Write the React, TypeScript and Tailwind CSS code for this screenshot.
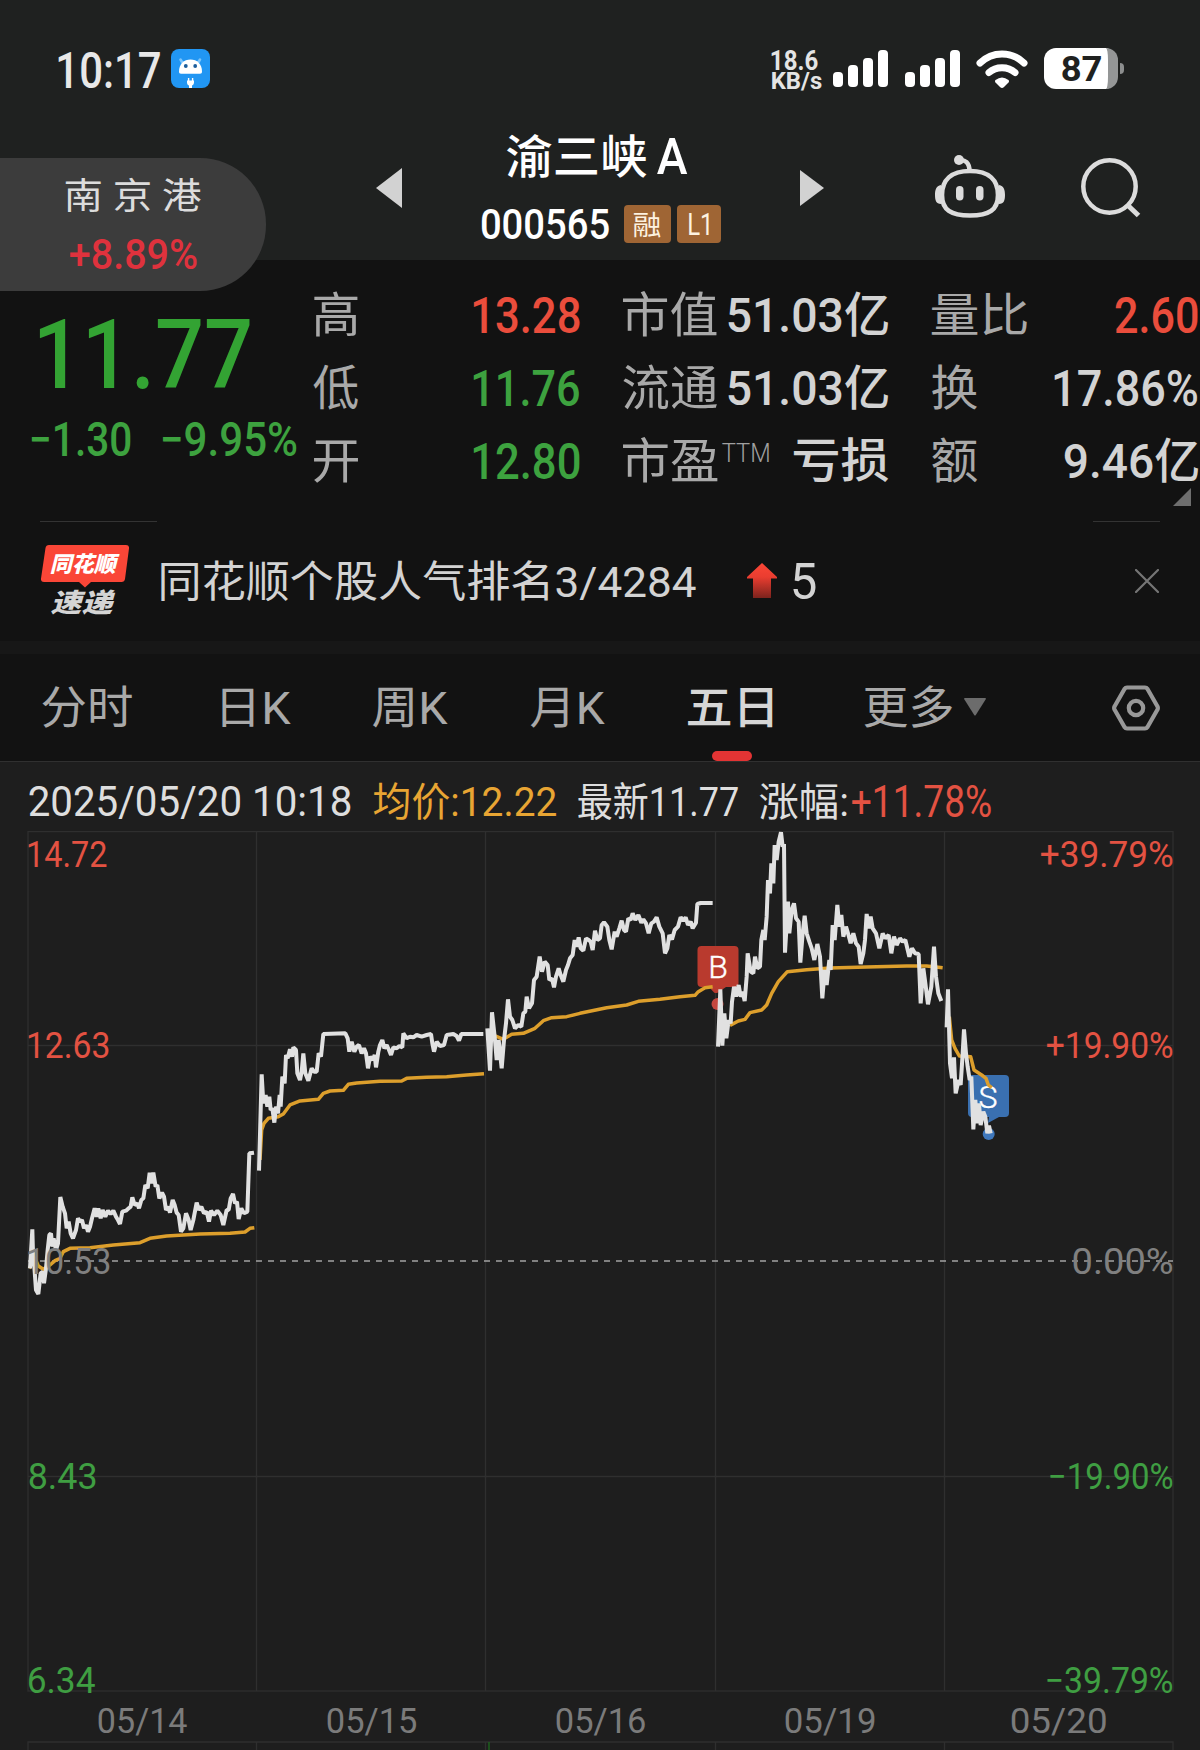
import { useLayoutEffect, useRef } from 'react';
import type { ReactNode } from 'react';

/** Text whose glyphs fill the box given by the width and height classes. */
function Fit({ className = '', children }: { className?: string; children: string }) {
  const box = useRef<HTMLSpanElement>(null);
  const inner = useRef<HTMLSpanElement>(null);
  const mark = useRef<HTMLElement>(null);
  useLayoutEffect(() => {
    const b = box.current!;
    const t = inner.current!;
    const cs = getComputedStyle(t);
    const ctx = document.createElement('canvas').getContext('2d')!;
    ctx.font = `${cs.fontStyle} ${cs.fontWeight} ${cs.fontSize} ${cs.fontFamily}`;
    const m = ctx.measureText(children);
    // Latin bounds are measured slightly narrow, ideographs slightly wide.
    const inset = /[\u4e00-\u9fff]/.test(children) ? -0.4 : 0.7;
    const sx = (b.clientWidth - 2 * inset) / (m.actualBoundingBoxLeft + m.actualBoundingBoxRight);
    const sy = b.clientHeight / (m.actualBoundingBoxAscent + m.actualBoundingBoxDescent);
    const base = mark.current!.offsetTop + mark.current!.offsetHeight;
    const tx = m.actualBoundingBoxLeft * sx + inset;
    const ty = -(base - m.actualBoundingBoxAscent) * sy;
    t.style.transform = `translate(${tx}px, ${ty}px) scale(${sx}, ${sy})`;
  }, [children]);
  return (
    <span ref={box} className={`relative block shrink-0 ${className}`}>
      <span ref={inner} className="absolute left-0 top-0 origin-top-left whitespace-pre leading-[0.75]">
        {children}
        <i ref={mark} className="inline-block h-0 w-0" />
      </span>
    </span>
  );
}

function Signal() {
  return (
    <div className="flex h-[37px] items-end gap-[5px]">
      <i className="h-[15px] w-[10px] rounded-[4px] bg-white" />
      <i className="h-[22px] w-[10px] rounded-[4px] bg-white" />
      <i className="h-[29px] w-[10px] rounded-[4px] bg-white" />
      <i className="h-[37px] w-[10px] rounded-[4px] bg-white" />
    </div>
  );
}

function StatusBar() {
  return (
    <div className="flex h-[137px] items-center pl-[58px]">
      <Fit className="mt-[2px] h-[36px] w-[103px] text-[50px] font-medium text-[#e8e8e8]">10:17</Fit>
      <svg className="ml-[10px] h-[39px] w-[39px] shrink-0" viewBox="0 0 39 39">
        <rect width="39" height="39" rx="8" fill="#2196f3" />
        <path d="M9.5 10.500l3 5M29 10.500l-3 5" stroke="#7cc4fa" strokeWidth="2.600" strokeLinecap="round" />
        <path d="M8 22.500c0-7.500 5-12 11.500-12s11.500 4.500 11.500 12c0 1.700-.6 2.200-2 2.200H10c-1.400 0-2-.5-2-2.200z" fill="#fff" />
        <circle cx="14.800" cy="17" r="1.900" fill="#1c5e9c" />
        <circle cx="24.200" cy="17" r="1.900" fill="#1c5e9c" />
        <path d="M17.600 29v4M21.600 29v4" stroke="#fff" strokeWidth="1.400" />
        <path d="M16 31.500h7v2c0 2-1.500 2.700-2 3V39h-3v-2.500c-.7-.3-2-1-2-3z" fill="#fff" />
      </svg>
      <div className="ml-[561px] mt-[4px] flex flex-col gap-[2px]">
        <Fit className="h-[20px] w-[48px] text-[26px] font-bold text-[#e4e4e4]">18.6</Fit>
        <Fit className="h-[19px] w-[51px] text-[23px] font-bold text-[#e4e4e4]">KB/s</Fit>
      </div>
      <div className="ml-[11px]"><Signal /></div>
      <div className="ml-[17px]"><Signal /></div>
      <svg className="ml-[16px] h-[38px] w-[52px] shrink-0" viewBox="0 0 52 38">
        <g fill="none" stroke="#fff" strokeWidth="7" strokeLinecap="round">
          <path d="M4 13C16.500 1 35.500 1 48 13" />
          <path d="M13 22.500C20 16 32 16 39 22.500" />
        </g>
        <path d="M19.500 30q6.500-5 13 0q1 1 0 2.500l-4.500 4.500q-2 2-4 0l-4.500-4.500q-1-1.500 0-2.500z" fill="#fff" />
      </svg>
      <div className="ml-[16px] flex h-[41px] w-[74px] shrink-0 items-center overflow-hidden rounded-[12px] border-r-[10px] border-[#949696] bg-white pl-[17px]">
        <Fit className="h-[25px] w-[41px] text-[35px] font-bold text-[#1f2120]">87</Fit>
      </div>
      <i className="ml-[2px] h-[11px] w-[4px] rounded-r-[4px] bg-[#8c8e8e]" />
    </div>
  );
}

function TitleBar() {
  return (
    <div className="-mt-[4px] flex items-start pl-[376px]">
      <svg className="mt-[35px] h-[40px] w-[26px] shrink-0" viewBox="0 0 26 40"><path d="M26 0v40L0 20z" fill="#d2d2d2" /></svg>
      <div className="ml-[79px] w-[240px] shrink-0">
        <div className="flex h-[44px] items-start pl-[26px]">
          <Fit className="h-[45px] w-[139px] text-[47px] font-medium text-white">渝三峡</Fit>
          <Fit className="ml-[10px] mt-[5px] h-[36px] w-[32px] text-[50px] font-medium text-white">A</Fit>
        </div>
        <div className="mt-[28px] flex h-[38px] items-center">
          <Fit className="h-[30px] w-[129px] text-[42px] font-medium text-white">000565</Fit>
          <div className="ml-[14px] flex h-[38px] w-[47px] items-center justify-center rounded-[4px] bg-[#9f6534]">
            <Fit className="h-[27px] w-[27px] text-[28px] text-[#fdf2e0]">融</Fit>
          </div>
          <div className="ml-[6px] flex h-[38px] w-[44px] items-center justify-center rounded-[4px] bg-[#9f6534]">
            <Fit className="h-[22px] w-[22px] text-[31px] text-[#fdf2e0]">L1</Fit>
          </div>
        </div>
      </div>
      <svg className="ml-[79px] mt-[37px] h-[36px] w-[24px] shrink-0" viewBox="0 0 24 36"><path d="M0 0v36L24 18z" fill="#d2d2d2" /></svg>
      <svg className="ml-[111px] mt-[22px] h-[64px] w-[70px] shrink-0" viewBox="0 0 70 64">
        <circle cx="24" cy="5" r="5" fill="#dcdcdc" />
        <path d="M24 5.500C30 4 34.500 8 34.500 16" fill="none" stroke="#dcdcdc" strokeWidth="4.500" />
        <path d="M35 16C54 16 63 25 63 40C63 55 54 60.500 35 60.500S7 55 7 40C7 25 16 16 35 16z" fill="none" stroke="#dcdcdc" strokeWidth="4.600" />
        <path d="M6 30C1 31 0 35 0 40s1 9 6 9zM64 30c5 1 6 5 6 10s-1 9-6 9z" fill="#dcdcdc" />
        <rect x="21" y="31" width="7.500" height="14.500" rx="3.700" fill="#dcdcdc" />
        <rect x="41" y="31" width="7.500" height="14.500" rx="3.700" fill="#dcdcdc" />
      </svg>
      <svg className="ml-[76px] mt-[25px] h-[60px] w-[60px] shrink-0" viewBox="0 0 60 60" fill="none" stroke="#dcdcdc" strokeWidth="4.500">
        <ellipse cx="28.500" cy="28.500" rx="26.200" ry="26.200" />
        <path d="M47 47.500L57.500 57.500" strokeWidth="5" />
      </svg>
    </div>
  );
}

function Stat({ label, children }: { label: ReactNode; children: ReactNode }) {
  return (
    <div className="flex h-[73px] items-center justify-between">
      <div className="flex items-center">{label}</div>
      {children}
    </div>
  );
}

function Quote() {
  return (
    <div className="relative flex h-[261px] items-start">
      <div className="w-[314px] shrink-0 pl-[31px] pt-[59px]">
        <Fit className="ml-[8px] h-[70px] w-[212px] text-[99px] font-medium text-[#33a333]">11.77</Fit>
        <div className="mt-[33px] flex">
          <Fit className="h-[34px] w-[100px] text-[46px] font-medium text-[#3da23f]">−1.30</Fit>
          <Fit className="ml-[31px] h-[34px] w-[135px] text-[46px] font-medium text-[#3da23f]">−9.95%</Fit>
        </div>
      </div>
      <div className="w-[266px] shrink-0 pt-[17px]">
        <Stat label={<Fit className="h-[46px] w-[44px] text-[47px] text-[#a9a9a9]">高</Fit>}>
          <Fit className="mt-[3px] h-[36px] w-[107px] text-[50px] font-medium text-[#ea4d3c]">13.28</Fit>
        </Stat>
        <Stat label={<Fit className="h-[46px] w-[44px] text-[47px] text-[#a9a9a9]">低</Fit>}>
          <Fit className="mt-[3px] h-[36px] w-[107px] text-[50px] font-medium text-[#3da23f]">11.76</Fit>
        </Stat>
        <Stat label={<Fit className="mt-[3px] h-[43px] w-[44px] text-[47px] text-[#a9a9a9]">开</Fit>}>
          <Fit className="mt-[3px] h-[36px] w-[107px] text-[50px] font-medium text-[#3da23f]">12.80</Fit>
        </Stat>
      </div>
      <div className="ml-[43px] w-[265px] shrink-0 pt-[17px]">
        <Stat label={<Fit className="h-[46px] w-[94px] text-[47px] text-[#a9a9a9]">市值</Fit>}>
          <Fit className="h-[46px] w-[160px] text-[48px] font-medium text-[#d3d3d3]">51.03亿</Fit>
        </Stat>
        <Stat label={<Fit className="h-[46px] w-[94px] text-[47px] text-[#a9a9a9]">流通</Fit>}>
          <Fit className="h-[46px] w-[160px] text-[48px] font-medium text-[#d3d3d3]">51.03亿</Fit>
        </Stat>
        <Stat
          label={
            <>
              <Fit className="h-[46px] w-[94px] text-[47px] text-[#a9a9a9]">市盈</Fit>
              <Fit className="-mt-[15px] ml-[4px] h-[19px] w-[49px] text-[26px] font-light text-[#a0a0a0]">TTM</Fit>
            </>
          }
        >
          <Fit className="h-[46px] w-[94px] text-[47px] font-medium text-[#d3d3d3]">亏损</Fit>
        </Stat>
      </div>
      <div className="ml-[44px] w-[266px] shrink-0 pt-[17px]">
        <Stat label={<Fit className="h-[44px] w-[95px] text-[47px] text-[#a9a9a9]">量比</Fit>}>
          <Fit className="mt-[3px] h-[36px] w-[83px] text-[50px] font-medium text-[#ea4d3c]">2.60</Fit>
        </Stat>
        <Stat label={<Fit className="h-[46px] w-[45px] text-[47px] text-[#a9a9a9]">换</Fit>}>
          <Fit className="mt-[3px] h-[36px] w-[144px] text-[50px] font-medium text-[#d3d3d3]">17.86%</Fit>
        </Stat>
        <Stat label={<Fit className="h-[46px] w-[45px] text-[47px] text-[#a9a9a9]">额</Fit>}>
          <Fit className="h-[46px] w-[133px] text-[48px] font-medium text-[#d3d3d3]">9.46亿</Fit>
        </Stat>
      </div>
      <svg className="absolute right-[9px] top-[228px] h-[18px] w-[18px]" viewBox="0 0 18 18"><path d="M18 0v18H0z" fill="#6e6e6e" /></svg>
    </div>
  );
}

function Ranking() {
  return (
    <div className="h-[120px]">
      <div className="flex justify-between pl-[40px] pr-[40px]">
        <i className="h-px w-[117px] bg-[#333]" />
        <i className="h-px w-[67px] bg-[#333]" />
      </div>
      <div className="flex items-start pl-[41px] pt-[23px]">
        <div className="relative h-[72px] w-[88px] shrink-0">
          <svg className="absolute inset-0" width="88" height="72" viewBox="0 0 88 72">
            <path d="M8 0H85q3.500 0 3 3.500L84 34q-.5 3-3.500 3H50l-6 5.500L38 37H3q-3.500 0-3-3.500L4.500 3Q5 0 8 0z" fill="#fa4637" />
          </svg>
          <div className="relative pl-[10px] pt-[8px]">
            <Fit className="h-[22px] w-[69px] text-[24px] font-black italic text-white">同花顺</Fit>
            <Fit className="mt-[14px] h-[27px] w-[64px] text-[29px] font-black italic text-[#d4d4d4]">速递</Fit>
          </div>
        </div>
        <Fit className="ml-[32px] mt-[15px] h-[42px] w-[535px] text-[43px] text-[#d3d3d3]">同花顺个股人气排名3/4284</Fit>
        <svg className="ml-[51px] mt-[18px] h-[35px] w-[30px] shrink-0" viewBox="0 0 30 35">
          <defs>
            <linearGradient id="rise" x1="0" y1="0" x2="0" y2="1">
              <stop offset="0" stopColor="#fb4636" />
              <stop offset="0.400" stopColor="#ea3d30" />
              <stop offset="1" stopColor="#7c231d" />
            </linearGradient>
          </defs>
          <path d="M15 0L30 14v1.500h-6V35H6V15.500H0V14z" fill="url(#rise)" />
        </svg>
        <Fit className="ml-[15px] mt-[18px] h-[36px] w-[25px] text-[50px] text-[#d3d3d3]">5</Fit>
        <svg className="ml-[318px] mt-[24px] h-[24px] w-[24px] shrink-0" viewBox="0 0 24 24">
          <path d="M1 1l22 22M23 1L1 23" stroke="#757575" strokeWidth="2.200" strokeLinecap="round" />
        </svg>
      </div>
    </div>
  );
}

function Tabs() {
  return (
    <div className="flex h-[108px] items-start border-b border-[#303030] pl-[42px] pt-[31px]">
      <Fit className="h-[43px] w-[90px] text-[45px] text-[#a9a9a9]">分时</Fit>
      <Fit className="ml-[90px] mt-[3px] h-[40px] w-[69px] text-[45px] text-[#a9a9a9]">日K</Fit>
      <Fit className="ml-[82px] mt-[2px] h-[41px] w-[75px] text-[45px] text-[#a9a9a9]">周K</Fit>
      <Fit className="ml-[83px] mt-[2px] h-[41px] w-[74px] text-[45px] text-[#a9a9a9]">月K</Fit>
      <div className="ml-[83px] mt-[3px] flex w-[84px] shrink-0 flex-col">
        <Fit className="h-[40px] w-[84px] text-[45px] font-medium text-[#d6d6d6]">五日</Fit>
        <i className="ml-[24px] mt-[23px] h-[10px] w-[40px] rounded-[5px] bg-[#e33434]" />
      </div>
      <Fit className="ml-[93px] h-[43px] w-[87px] text-[45px] text-[#a9a9a9]">更多</Fit>
      <svg className="ml-[12px] mt-[13px] h-[18px] w-[22px] shrink-0" viewBox="0 0 22 18"><path d="M1 0h20q1.500 0 .6 1.500L11.800 17q-.8 1-1.600 0L.4 1.500Q-.5 0 1 0z" fill="#6c6c6c" /></svg>
      <svg className="ml-[126px] h-[46px] w-[48px] shrink-0" viewBox="0 0 48 46" fill="none" stroke="#989898" strokeWidth="4.200" strokeLinejoin="round">
        <path d="M15 2.500H33q1.500 0 2.500 1.500L45.500 21.500q.7 1.500 0 3L35.500 42q-1 1.500-2.500 1.500H15q-1.500 0-2.500-1.500L2.500 24.500q-.7-1.500 0-3L12.500 4q1-1.500 2.500-1.500z" />
        <circle cx="24" cy="23" r="7.200" />
      </svg>
    </div>
  );
}

function Info() {
  return (
    <div className="flex h-[69px] items-start pl-[28px] pt-[19px]">
      <Fit className="mt-[5px] h-[33px] w-[323px] text-[41px] text-[#dedede]">2025/05/20 10:18</Fit>
      <Fit className="ml-[23px] mt-[1px] h-[38px] w-[182px] text-[39px] text-[#e8a533]">均价:12.22</Fit>
      <Fit className="ml-[22px] mt-[1px] h-[38px] w-[160px] text-[39px] text-[#dedede]">最新11.77</Fit>
      <Fit className="ml-[22px] mt-[1px] h-[38px] w-[86px] text-[39px] text-[#dedede]">涨幅:</Fit>
      <Fit className="ml-[5px] mt-[5px] h-[31px] w-[141px] text-[41px] text-[#e35242]">+11.78%</Fit>
    </div>
  );
}

/* Intraday series, in thirds of a pixel, each relative to its own origin. */
const days = [
  {
    x: 0, y: 1020,
    price: '90,745 97,628 99,700 103,740 108,810 115,822 122,760 128,755 132,790 138,745 143,690 148,645 153,640 157,680 161,655 168,690 174,670 181,531 188,560 195,580 200,625 206,605 212,640 219,655 228,630 234,595 240,605 246,600 252,625 258,615 264,635 270,620 276,595 284,565 290,590 295,565 302,595 308,570 316,590 324,572 332,582 340,572 348,590 354,600 360,612 367,575 378,572 386,565 392,560 397,532 404,555 412,550 417,565 424,540 430,535 436,495 443,505 449,458 455,490 460,458 467,500 472,495 478,535 486,518 492,530 498,570 505,560 510,578 518,540 524,555 530,578 536,585 543,635 550,625 558,580 566,600 572,630 580,600 590,548 597,570 604,560 612,580 620,575 627,605 633,572 642,585 652,572 662,585 670,615 680,570 686,570 692,535 699,522 705,550 711,545 716,597 724,565 732,580 742,575 748,400 762,398',
    avg: '88,745 105,715 115,738 130,748 150,735 165,722 180,715 190,695 210,685 270,683 340,675 420,668 450,655 500,648 600,642 690,640 735,636 750,625 763,623',
  },
  {
    x: 240, y: 960,
    price: '57,632 65,343 70,430 77,405 82,440 88,410 92,450 97,445 103,488 108,440 114,460 119,405 122,440 127,350 134,370 138,285 143,295 150,268 156,290 160,262 168,270 172,340 180,360 185,335 190,280 196,340 205,362 215,325 222,335 230,335 236,280 243,290 250,222 316,220 323,235 328,275 335,245 343,275 350,260 357,255 365,280 372,265 378,280 384,325 390,290 398,300 404,285 408,322 415,275 420,255 427,240 433,265 440,255 447,270 453,285 460,262 470,265 478,258 487,262 490,220 500,235 510,230 520,232 530,225 545,230 560,225 573,222 577,250 582,275 590,245 600,258 612,255 620,225 640,222 650,228 657,242 664,222 730,222',
    avg: '60,600 65,510 72,490 85,475 115,470 130,462 150,435 180,423 235,418 250,400 270,393 310,391 325,373 350,369 420,364 485,363 500,355 560,352 620,350 680,345 732,341',
  },
  {
    x: 480, y: 880,
    price: '22,445 30,572 36,397 44,470 50,540 56,480 65,565 72,480 78,430 84,358 90,410 97,420 105,445 115,435 124,440 130,400 136,395 140,350 147,385 156,370 162,300 170,290 179,230 186,275 194,245 203,255 208,300 216,295 222,322 228,290 236,265 242,285 250,305 258,270 264,255 270,235 278,225 284,180 290,200 296,172 302,205 310,212 318,175 326,180 332,185 338,210 345,152 352,180 360,175 365,135 372,127 382,140 388,180 395,208 404,155 410,170 418,145 425,122 432,150 438,155 445,115 452,120 458,100 466,120 475,105 484,128 490,118 498,130 506,160 514,130 522,125 530,112 538,140 548,160 555,220 562,205 568,165 576,178 584,150 594,140 602,112 610,122 617,112 624,135 632,125 638,145 648,128 652,72 662,69 698,69',
    avg: '40,465 70,478 95,463 130,460 165,445 190,422 215,413 260,410 300,400 380,383 440,375 475,364 540,358 600,350 645,346 655,335 675,323 698,320',
  },
  {
    x: 700, y: 820,
    price: '54,680 61,508 67,677 73,580 79,655 86,600 92,610 96,545 102,500 108,530 116,495 122,530 128,515 134,543 140,470 143,400 152,455 160,460 165,410 172,445 180,440 184,360 190,330 194,360 200,290 204,180 210,220 214,130 220,190 224,75 230,120 236,65 243,37 248,80 252,72 255,398 264,245 268,340 275,270 282,250 288,295 296,305 301,428 308,340 314,287 320,340 328,365 335,385 343,420 352,372 360,410 367,535 374,450 380,495 388,420 392,450 398,315 404,360 412,255 418,320 424,285 430,350 438,320 444,340 452,370 460,340 468,370 476,380 482,432 490,400 495,360 500,282 506,325 512,290 518,325 528,340 538,385 548,340 556,355 566,345 574,400 582,350 590,375 600,355 608,365 616,360 628,410 636,385 645,400 656,402 662,550 670,445 676,490 684,553 694,500 702,380 708,470 715,520 724,543',
    avg: '90,616 115,603 135,598 150,578 185,570 200,555 215,520 235,485 262,455 320,449 390,444 500,441 620,438 680,438 728,443',
  },
  {
    x: 900, y: 920,
    price: '140,322 144,208 150,430 156,475 162,412 167,520 176,480 182,495 188,400 192,328 198,400 203,440 209,480 214,470 220,628 226,540 231,610 237,550 242,615 250,575 256,590 262,640 267,617 272,640',
    avg: '148,290 155,360 165,385 178,408 212,410 222,450 245,465 258,475 265,495 275,503',
  },
];

function Chart() {
  return (
    <div className="relative h-[919px]">
      <svg className="absolute inset-0" width="1200" height="919" viewBox="0 831 1200 919" fontFamily='Roboto, "Noto Sans", sans-serif'>
        <g stroke="#2f2f2f" strokeWidth="1.300" fill="none">
          <rect x="28" y="831.600" width="1145" height="859.400" />
          <path d="M256.500 831V1691M485.500 831V1691M715.500 831V1691M944.500 831V1691M28 1045.500H1173M28 1476.500H1173" />
          <path d="M28 1750V1742H1173V1750M256.500 1742v8M485.500 1742v8M715.500 1742v8M944.500 1742v8" />
        </g>
        <path d="M489 1742v8" stroke="#1d6b1d" strokeWidth="1.300" />
        <path d="M28 1261H1173" stroke="#a3a3a3" strokeWidth="1.700" strokeDasharray="6 6" />
        <rect x="697.500" y="946" width="41" height="41" rx="4" fill="#b93a2e" />
        <path d="M709 987h17l-8 5.500q-2 1-4 0z" fill="#b93a2e" />
        <circle cx="717.500" cy="1004" r="6" fill="#c4473e" />
        <rect x="968" y="1075" width="41" height="42" rx="4" fill="#3a70b0" />
        <path d="M989 1117h10l-11 6z" fill="#3a70b0" />
        <circle cx="988.700" cy="1134" r="6" fill="#3f78bd" />
        <text x="718" y="977.500" textAnchor="middle" fontSize="32" fontWeight="300" fill="#fff" stroke="#fff" strokeWidth="0.400">B</text>
        <text x="988" y="1108" textAnchor="middle" fontSize="32" fontWeight="300" fill="#fff" stroke="#fff" strokeWidth="0.400">S</text>
        {days.map((d) => (
          <g key={d.x} transform={`translate(${d.x} ${d.y}) scale(0.33333)`} fill="none">
            <polyline points={d.avg} stroke="#dd9f2c" strokeWidth="10.500" strokeLinejoin="round" />
            <polyline points={d.price} stroke="#e1e1e1" strokeWidth="12" strokeLinejoin="bevel" />
          </g>
        ))}
      </svg>
      <div className="absolute left-[28px] top-[10px] flex w-[1145px] flex-col">
        <div className="flex justify-between">
          <Fit className="h-[26px] w-[79px] text-[36px] text-[#e35242]">14.72</Fit>
          <Fit className="h-[26px] w-[133px] text-[36px] text-[#e35242]">+39.79%</Fit>
        </div>
        <div className="mt-[165px] flex justify-between">
          <Fit className="h-[26px] w-[81px] text-[36px] text-[#e35242]">12.63</Fit>
          <Fit className="h-[26px] w-[127px] text-[36px] text-[#e35242]">+19.90%</Fit>
        </div>
        <div className="mt-[190px] flex justify-between">
          <Fit className="h-[26px] w-[82px] text-[36px] text-[#808080]">10.53</Fit>
          <Fit className="h-[26px] w-[100px] text-[36px] text-[#808080]">0.00%</Fit>
        </div>
        <div className="mt-[189px] flex justify-between">
          <Fit className="h-[26px] w-[68px] text-[36px] text-[#3f9e42]">8.43</Fit>
          <Fit className="h-[26px] w-[124px] text-[36px] text-[#3f9e42]">−19.90%</Fit>
        </div>
        <div className="mt-[178px] flex justify-between">
          <Fit className="h-[26px] w-[68px] text-[36px] text-[#3f9e42]">6.34</Fit>
          <Fit className="h-[26px] w-[127px] text-[36px] text-[#3f9e42]">−39.79%</Fit>
        </div>
        <div className="mt-[15px] grid grid-cols-5 justify-items-center">
          <Fit className="h-[28px] w-[90px] text-[36px] text-[#7b7b7b]">05/14</Fit>
          <Fit className="h-[28px] w-[90px] text-[36px] text-[#7b7b7b]">05/15</Fit>
          <Fit className="h-[28px] w-[90px] text-[36px] text-[#7b7b7b]">05/16</Fit>
          <Fit className="h-[28px] w-[90px] text-[36px] text-[#7b7b7b]">05/19</Fit>
          <Fit className="h-[28px] w-[96px] text-[36px] text-[#7b7b7b]">05/20</Fit>
        </div>
      </div>
    </div>
  );
}

export default function App() {
  return (
    <div className="relative h-[1750px] w-[1200px] overflow-hidden bg-[#121212] font-[Roboto,'Noto_Sans_CJK_SC',sans-serif]">
      <header className="h-[260px] bg-[#1f2120]">
        <StatusBar />
        <TitleBar />
      </header>
      <div className="absolute left-0 top-[158px] h-[133px] w-[266px] rounded-r-[66px] bg-[#3c3c3c] pl-[66px] pt-[19px]">
        <Fit className="h-[36px] w-[135px] text-[36px] text-[#dcdcdc]">南 京 港</Fit>
        <Fit className="ml-[3px] mt-[25px] h-[31px] w-[129px] text-[42px] font-medium text-[#df323d]">+8.89%</Fit>
      </div>
      <Quote />
      <Ranking />
      <div className="h-[13px] bg-[#171717]" />
      <Tabs />
      <div className="bg-[#1e1e1e]">
        <Info />
        <Chart />
      </div>
    </div>
  );
}
